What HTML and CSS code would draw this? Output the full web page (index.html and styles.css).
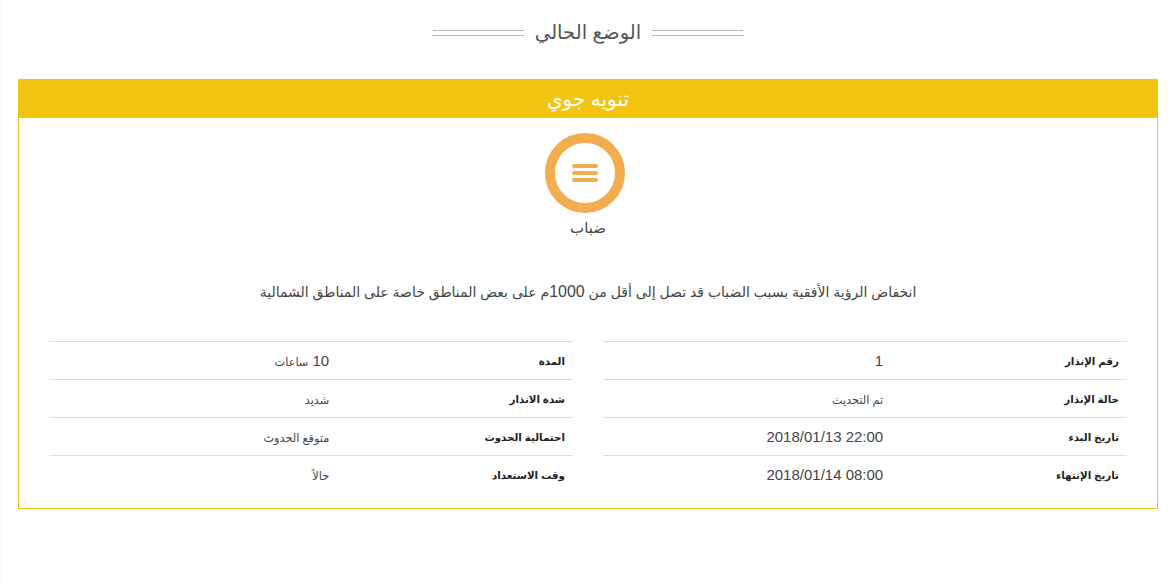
FILE: index.html
```html
<!DOCTYPE html>
<html lang="ar" dir="rtl">
<head>
    <meta charset="UTF-8">
    <meta name="viewport" content="width=device-width, initial-scale=1.0">
    <title>الوضع الحالي</title>
    <link rel="stylesheet" href="styles.css">
</head>
<body>
    <div class="page">
        <div class="page-title">
            <span class="title-line"></span>
            <h2>الوضع الحالي</h2>
            <span class="title-line"></span>
        </div>

        <div class="alert-card">
            <div class="alert-header">تنويه جوي</div>
            <div class="alert-body">
                <div class="phenomenon">
                    <div class="icon-row">
                        <div class="phenomenon-icon">
                            <span></span>
                            <span></span>
                            <span></span>
                        </div>
                    </div>
                    <div class="phenomenon-name">ضباب</div>
                </div>

                <p class="alert-text">انخفاض الرؤية الأفقية بسبب الضباب قد تصل إلى أقل من <span class="num">1000</span>م على بعض المناطق خاصة على المناطق الشمالية</p>

                <div class="details">
                    <table class="details-table">
                        <tr>
                            <th>رقم الإنذار</th>
                            <td>1</td>
                        </tr>
                        <tr>
                            <th>حالة الإنذار</th>
                            <td><span class="ar">تم التحديث</span></td>
                        </tr>
                        <tr>
                            <th>تاريخ البدء</th>
                            <td><bdi dir="ltr">2018/01/13 22:00</bdi></td>
                        </tr>
                        <tr>
                            <th>تاريخ الإنتهاء</th>
                            <td><bdi dir="ltr">2018/01/14 08:00</bdi></td>
                        </tr>
                    </table>
                    <table class="details-table">
                        <tr>
                            <th>المدة</th>
                            <td>10 <span class="ar">ساعات</span></td>
                        </tr>
                        <tr>
                            <th>شدة الانذار</th>
                            <td><span class="ar">شديد</span></td>
                        </tr>
                        <tr>
                            <th>احتمالية الحدوث</th>
                            <td><span class="ar">متوقع الحدوث</span></td>
                        </tr>
                        <tr>
                            <th>وقت الاستعداد</th>
                            <td><span class="ar">حالاً</span></td>
                        </tr>
                    </table>
                </div>
            </div>
        </div>
    </div>
</body>
</html>
```

FILE: styles.css
```css
html, body {
    margin: 0;
    height: 100%;
}
body {
    font-family: "Liberation Sans", "DejaVu Sans", sans-serif;
    font-size: 14px;
    color: #333;
    background-color: #fff;
    overflow: hidden;
}
.page {
    border-left: 3px solid #fafafa;
    min-height: 584px;
    box-sizing: border-box;
    padding: 15px 14px 0 15px;
}
.page-title {
    display: flex;
    justify-content: center;
    align-items: center;
    gap: 11px;
    height: 34px;
    margin-bottom: 30px;
}
.page-title h2 {
    margin: 0;
    font-size: 19.6px;
    font-weight: normal;
    color: #555;
    line-height: 32px;
}
.title-line {
    display: block;
    width: 91px;
    height: 4px;
    margin-top: 2px;
    border-top: 1px solid #b8b8b8;
    border-bottom: 1px solid #b8b8b8;
}
.alert-card {
    border: 1px solid #f1c40f;
}
.alert-header {
    margin: -1px -1px 0;
    height: 39px;
    line-height: 40px;
    text-align: center;
    font-size: 20px;
    color: #fff;
    background-color: #f1c40f;
}
.alert-body {
    padding: 15px 30px;
}
.phenomenon {
    text-align: center;
}
.icon-row {
    display: flex;
    justify-content: center;
    padding-right: 6px;
}
.phenomenon-icon {
    width: 80px;
    height: 80px;
    box-sizing: border-box;
    border: 10px solid #f3ad51;
    border-radius: 50%;
    display: flex;
    flex-direction: column;
    justify-content: center;
    align-items: center;
    gap: 3px;
}
.phenomenon-icon span {
    display: block;
    width: 26px;
    height: 4px;
    border-radius: 2px;
    background-color: #f3ad51;
}
.phenomenon-name {
    margin-top: 5px;
    line-height: 20px;
    font-size: 15px;
    color: #444;
}
.alert-text {
    margin: 44px 0 0;
    line-height: 20px;
    text-align: center;
    color: #444;
}
.num {
    font-size: 16px;
}
.details {
    display: flex;
    gap: 30px;
    margin-top: 39px;
}
.details-table {
    flex: 1;
    border-collapse: collapse;
    table-layout: fixed;
}
.details-table th,
.details-table td {
    height: 37px;
    padding: 0 8px;
    border-top: 1px solid #ddd;
    text-align: right;
}
.details-table th {
    width: 45%;
    box-sizing: border-box;
    font-size: 10.3px;
    color: #222;
}
.details-table td {
    font-size: 15px;
    color: #444;
}
.ar {
    font-size: 11.3px;
}
```
